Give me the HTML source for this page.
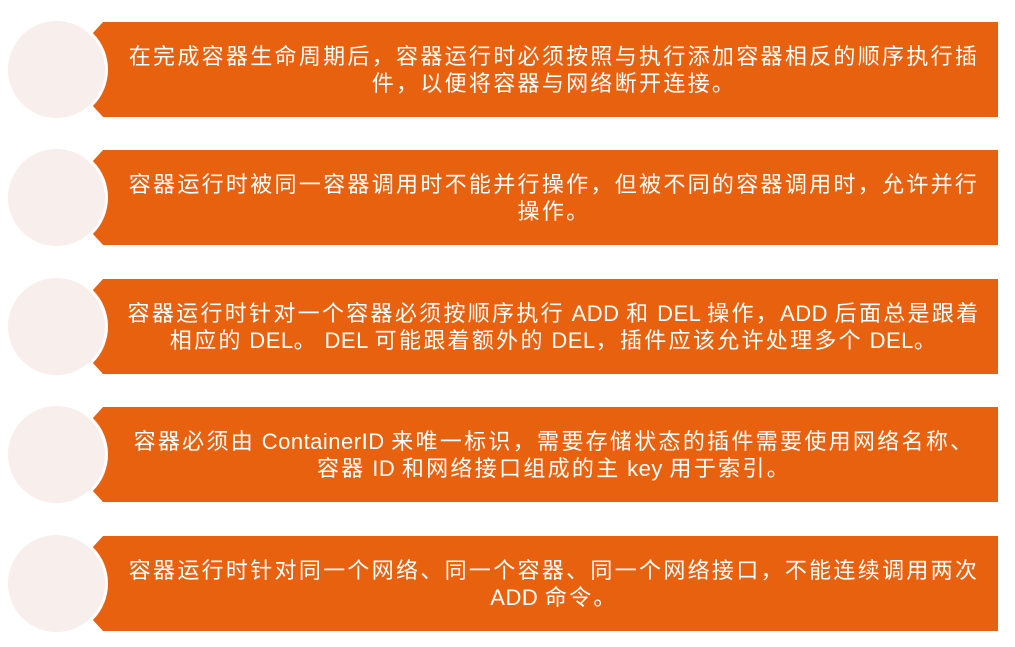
<!DOCTYPE html>
<html><head><meta charset="utf-8"><style>
body{margin:0;width:1015px;height:647px;background:#fff;position:relative;overflow:hidden;font-family:"Liberation Sans","Noto Sans CJK SC",sans-serif}
.bar{position:absolute;left:92px;width:906px;height:95px;background:#E8610F;clip-path:polygon(11px 0,100% 0,100% 100%,11px 100%,0 83px,0 12px)}
.t{position:absolute;left:101px;width:906px;text-align:center;color:#fff;font-size:22px;letter-spacing:2.3px;line-height:27px;white-space:nowrap}
.t i{font-style:normal;letter-spacing:0.5px}
.c{position:absolute;left:5px;width:97px;height:97px;border-radius:50%;background:#F8EEEC;border:3px solid #fff;box-sizing:content-box}
</style></head><body>
<div class="bar" style="top:22px"></div><div class="c" style="top:18px"></div>
<div class="t" style="top:43px">在完成容器生命周期后，容器运行时必须按照与执行添加容器相反的顺序执行插<br>件，以便将容器与网络断开连接。</div>
<div class="bar" style="top:150px"></div><div class="c" style="top:146px"></div>
<div class="t" style="top:171px">容器运行时被同一容器调用时不能并行操作，但被不同的容器调用时，允许并行<br>操作。</div>
<div class="bar" style="top:279px"></div><div class="c" style="top:275px"></div>
<div class="t" style="top:300px">容器运行时针对一个容器必须按顺序执行<i> ADD </i>和<i> DEL </i>操作，<i>ADD </i>后面总是跟着<br>相应的<i> DEL</i>。<i> DEL </i>可能跟着额外的<i> DEL</i>，插件应该允许处理多个<i> DEL</i>。</div>
<div class="bar" style="top:407px"></div><div class="c" style="top:403px"></div>
<div class="t" style="top:428px">容器必须由<i> ContainerID </i>来唯一标识，需要存储状态的插件需要使用网络名称、<br>容器<i> ID </i>和网络接口组成的主<i> key </i>用于索引。</div>
<div class="bar" style="top:536px"></div><div class="c" style="top:532px"></div>
<div class="t" style="top:557px">容器运行时针对同一个网络、同一个容器、同一个网络接口，不能连续调用两次<br><i>ADD </i>命令。</div>
</body></html>
